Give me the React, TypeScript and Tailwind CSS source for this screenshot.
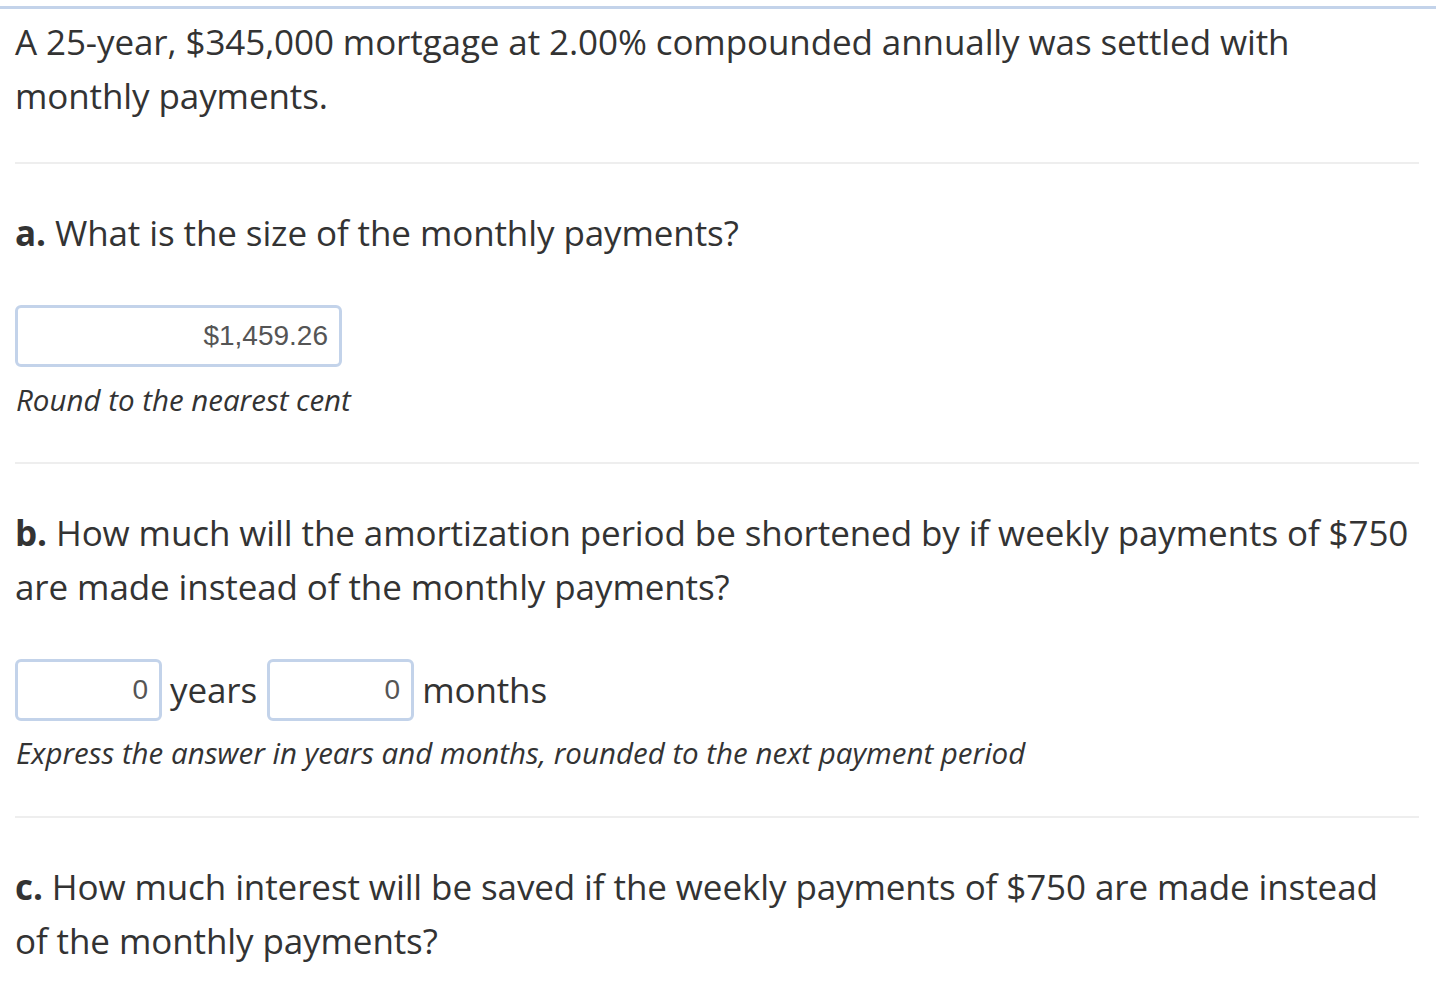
import React from "react";

const Hr = () => <div className="h-[2px] bg-[#eeeeee]" />;

const Box = ({ w, value }: { w: string; value: string }) => (
  <div
    className={`${w} h-[62px] border-[3px] border-[#c3d3ea] rounded-[6px] bg-white flex items-center justify-end pr-[11px] text-[28px] text-[#555555] tracking-normal`}
    style={{ fontFamily: '"Liberation Sans", Arial, sans-serif' }}
  >
    {value}
  </div>
);

export default function App() {
  return (
    <div
      className="bg-white min-h-[998px] text-[#333333]"
      style={{ fontFamily: '"Open Sans", "Noto Sans", sans-serif' }}
    >
      <div className="pt-[6px]">
        <div className="h-[3px] bg-[#c3d3ea]" />
      </div>
      <div className="pl-[15px] pr-[17px] text-[35px] leading-[54px] tracking-[-0.1px]">
        <p className="pt-[6px] mb-[39px]">
          A 25-year, $345,000 mortgage at 2.00% compounded annually was settled with monthly payments.
        </p>
        <Hr />
        <p className="mt-[42px]">
          <b className="font-bold">a.</b> What is the size of the monthly payments?
        </p>
        <div className="mt-[45px]">
          <Box w="w-[327px]" value="$1,459.26" />
        </div>
        <p className="mt-[12px] mb-[41px] italic text-[29.5px] leading-[42px] pl-[1px] tracking-normal">
          Round to the nearest cent
        </p>
        <Hr />
        <p className="mt-[42px]">
          <b className="font-bold">b.</b> How much will the amortization period be shortened by if weekly payments of $750 are made instead of the monthly payments?
        </p>
        <div className="mt-[45px] flex items-center">
          <Box w="w-[147px]" value="0" />
          <span className="ml-[8px] mr-[10px]">years</span>
          <Box w="w-[147px]" value="0" />
          <span className="ml-[8px]">months</span>
        </div>
        <p className="mt-[11px] mb-[42px] italic text-[29.5px] leading-[42px] pl-[1px] tracking-normal">
          Express the answer in years and months, rounded to the next payment period
        </p>
        <Hr />
        <p className="mt-[42px]">
          <b className="font-bold">c.</b> How much interest will be saved if the weekly payments of $750 are made instead of the monthly payments?
        </p>
      </div>
    </div>
  );
}
